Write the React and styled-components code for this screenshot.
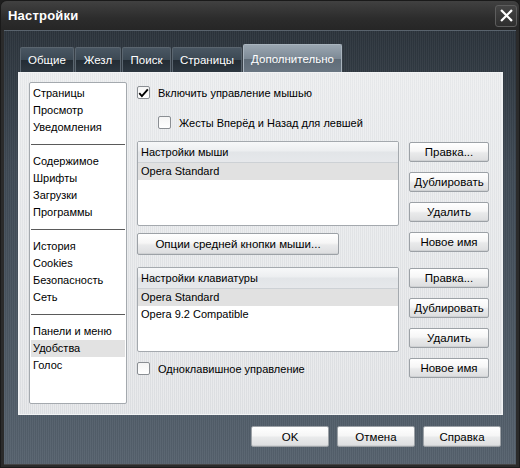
import React from "react";
import styled, { createGlobalStyle } from "styled-components";

const GlobalStyle = createGlobalStyle`
  html, body {
    margin: 0;
    padding: 0;
    background: #1e1e1e;
  }
  * {
    box-sizing: border-box;
  }
`;

const FONT = `"Liberation Sans", Arial, sans-serif`;

const Window = styled.div`
  width: 520px;
  height: 468px;
  display: flex;
  flex-direction: column;
  background: #2b2b2b;
  border-radius: 7px 7px 0 0;
  border: 1px solid #1a1a1a;
  font-family: ${FONT};
  font-size: 11px;
  color: #000;
  overflow: hidden;
`;

const TitleBar = styled.div`
  height: 29px;
  display: flex;
  align-items: center;
  justify-content: space-between;
  padding: 0 2px 0 7px;
  background: linear-gradient(#414141, #2c2c2c 60%, #262626);
`;

const Title = styled.div`
  color: #fff;
  font-weight: bold;
  font-size: 13px;
  letter-spacing: 0.2px;
`;

const CloseButton = styled.div`
  width: 22px;
  height: 22px;
  border-radius: 3px;
  border: 1px solid #5d5d5d;
  background: linear-gradient(#454545, #2e2e2e);
  display: flex;
  align-items: center;
  justify-content: center;
`;

const Body = styled.div`
  flex: 1;
  margin: 0 3px 3px 3px;
  border-top: 1px solid #59636d;
  padding: 13px 13px 0 14px;
  display: flex;
  flex-direction: column;
  background:
    repeating-linear-gradient(90deg, rgba(255,255,255,0.04) 0 1px, rgba(0,0,0,0.04) 1px 2px),
    linear-gradient(#2c343c, #3e4954 30%, #56626e 100%);
  box-shadow: 0 1px 0 #444;
`;

const Tabs = styled.div`
  display: flex;
  align-items: flex-end;
  gap: 1px;
  padding-left: 2px;
  height: 28px;
`;

const Tab = styled.div`
  height: ${(p) => (p.$active ? 28 : 25)}px;
  width: ${(p) => p.$w}px;
  display: flex;
  align-items: center;
  justify-content: center;
  color: #fff;
  font-size: 11.5px;
  white-space: nowrap;
  border: 1px solid ${(p) => (p.$active ? "#a9b4be" : "#5b6670")};
  border-bottom: none;
  border-radius: 2px 2px 0 0;
  background: ${(p) =>
    p.$active
      ? "linear-gradient(#9aa6b1, #7d8a96 50%, #5f6c78 52%, #6a7682)"
      : "linear-gradient(#4a5763, #3b4853 50%, #232c34 52%, #2e3841)"};
`;

const Panel = styled.div`
  height: 343px;
  display: flex;
  gap: 10px;
  padding: 9px 13px 10px 10px;
  background:
    repeating-linear-gradient(90deg, rgba(255,255,255,0.35) 0 1px, rgba(0,0,0,0) 1px 2px),
    linear-gradient(#e6e8ea, #dcdee1);
  border: 1px solid #f2f3f4;
`;

const SideList = styled.div`
  width: 100px;
  padding: 2px 1px;
  background: #fff;
  border: 1px solid #a4a9ae;
  border-radius: 2px;
  display: flex;
  flex-direction: column;
`;

const SideItem = styled.div`
  height: 17px;
  line-height: 17px;
  padding-left: 2px;
  white-space: nowrap;
  background: ${(p) => (p.$selected ? "#e2e2e2" : "transparent")};
`;

const SideSeparator = styled.div`
  height: 17px;
  display: flex;
  align-items: center;
  &::after {
    content: "";
    display: block;
    width: 100%;
    height: 1px;
    background: #5a5a5a;
  }
`;

const Main = styled.div`
  flex: 1;
  display: flex;
  flex-direction: column;
`;

const CheckRow = styled.label`
  display: flex;
  align-items: center;
  gap: 8px;
  height: 15px;
  padding-left: ${(p) => p.$indent || 0}px;
  margin-top: ${(p) => p.$top || 0}px;
  white-space: nowrap;
`;

const Box = styled.span`
  width: 13px;
  height: 13px;
  flex: none;
  border: 1px solid #8a8e93;
  border-radius: 2px;
  background: linear-gradient(#f4f4f4, #fff);
  display: flex;
  align-items: center;
  justify-content: center;
`;

const Section = styled.div`
  display: flex;
  gap: 10px;
  margin-top: ${(p) => p.$top}px;
`;

const LeftCol = styled.div`
  width: 262px;
  display: flex;
  flex-direction: column;
  gap: ${(p) => p.$gap}px;
`;

const ListBox = styled.div`
  height: 85px;
  background: #fff;
  border: 1px solid #a4a9ae;
  border-radius: 2px;
  overflow: hidden;
`;

const ListHeader = styled.div`
  height: 21px;
  line-height: 21px;
  padding-left: 3px;
  background: linear-gradient(#f7f8f9, #eceef0 45%, #e2e5e8 50%, #e6e8eb);
  border-bottom: 1px solid #cdd1d5;
`;

const ListRow = styled.div`
  height: 17px;
  line-height: 17px;
  padding-left: 3px;
  background: ${(p) => (p.$selected ? "#e1e1e1" : "#fff")};
`;

const ButtonCol = styled.div`
  display: flex;
  flex-direction: column;
  gap: 10px;
  padding-top: 1px;
`;

const Button = styled.button`
  width: ${(p) => p.$w || 80}px;
  height: ${(p) => p.$h || 20}px;
  padding: 0;
  font-family: ${FONT};
  font-size: 11.5px;
  color: #000;
  border: 1px solid #9ca1a6;
  border-radius: 2px;
  background: linear-gradient(#ffffff, #f6f6f6 45%, #e9eaeb 55%, #dcdddf);
  box-shadow: inset 0 -1px 0 #cfd1d3;
  white-space: nowrap;
`;

const Footer = styled.div`
  display: flex;
  justify-content: flex-end;
  gap: 8px;
  padding: 11px 2px 0 0;
`;

const Check = () => (
  <svg width="13" height="12" viewBox="0 0 13 12">
    <path d="M1.5 6.2 L4.6 9.6 L11.6 1.6" fill="none" stroke="#000" strokeWidth="2.2" strokeLinejoin="miter" />
  </svg>
);

const CloseIcon = () => (
  <svg width="13" height="13" viewBox="0 0 14 14">
    <path d="M2 2 L12 12 M12 2 L2 12" stroke="#fff" strokeWidth="2.4" strokeLinecap="square" />
  </svg>
);

const sideGroups = [
  ["Страницы", "Просмотр", "Уведомления"],
  ["Содержимое", "Шрифты", "Загрузки", "Программы"],
  ["История", "Cookies", "Безопасность", "Сеть"],
  ["Панели и меню", "Удобства", "Голос"],
];

const tabs = [
  { label: "Общие", w: 54 },
  { label: "Жезл", w: 46 },
  { label: "Поиск", w: 49 },
  { label: "Страницы", w: 70 },
  { label: "Дополнительно", w: 99, active: true },
];

const EditButtons = () => (
  <ButtonCol>
    <Button>Правка...</Button>
    <Button>Дублировать</Button>
    <Button>Удалить</Button>
    <Button>Новое имя</Button>
  </ButtonCol>
);

export default function App() {
  return (
    <>
      <GlobalStyle />
      <Window>
        <TitleBar>
          <Title>Настройки</Title>
          <CloseButton>
            <CloseIcon />
          </CloseButton>
        </TitleBar>
        <Body>
          <Tabs>
            {tabs.map((t) => (
              <Tab key={t.label} $w={t.w} $active={t.active}>
                {t.label}
              </Tab>
            ))}
          </Tabs>
          <Panel>
            <SideList>
              {sideGroups.map((group, gi) => (
                <React.Fragment key={gi}>
                  {gi > 0 && <SideSeparator />}
                  {group.map((item) => (
                    <SideItem key={item} $selected={item === "Удобства"}>
                      {item}
                    </SideItem>
                  ))}
                </React.Fragment>
              ))}
            </SideList>
            <Main>
              <CheckRow $top={3}>
                <Box>
                  <Check />
                </Box>
                Включить управление мышью
              </CheckRow>
              <CheckRow $indent={21} $top={15}>
                <Box />
                Жесты Вперёд и Назад для левшей
              </CheckRow>
              <Section $top={11}>
                <LeftCol $gap={7}>
                  <ListBox>
                    <ListHeader>Настройки мыши</ListHeader>
                    <ListRow $selected>Opera Standard</ListRow>
                  </ListBox>
                  <Button $w={202} $h={22}>
                    Опции средней кнопки мыши...
                  </Button>
                </LeftCol>
                <EditButtons />
              </Section>
              <Section $top={12}>
                <LeftCol $gap={9}>
                  <ListBox>
                    <ListHeader>Настройки клавиатуры</ListHeader>
                    <ListRow $selected>Opera Standard</ListRow>
                    <ListRow>Opera 9.2 Compatible</ListRow>
                  </ListBox>
                  <CheckRow>
                    <Box />
                    Одноклавишное управление
                  </CheckRow>
                </LeftCol>
                <EditButtons />
              </Section>
            </Main>
          </Panel>
          <Footer>
            <Button $w={78} $h={21}>OK</Button>
            <Button $w={78} $h={21}>Отмена</Button>
            <Button $w={78} $h={21}>Справка</Button>
          </Footer>
        </Body>
      </Window>
    </>
  );
}
